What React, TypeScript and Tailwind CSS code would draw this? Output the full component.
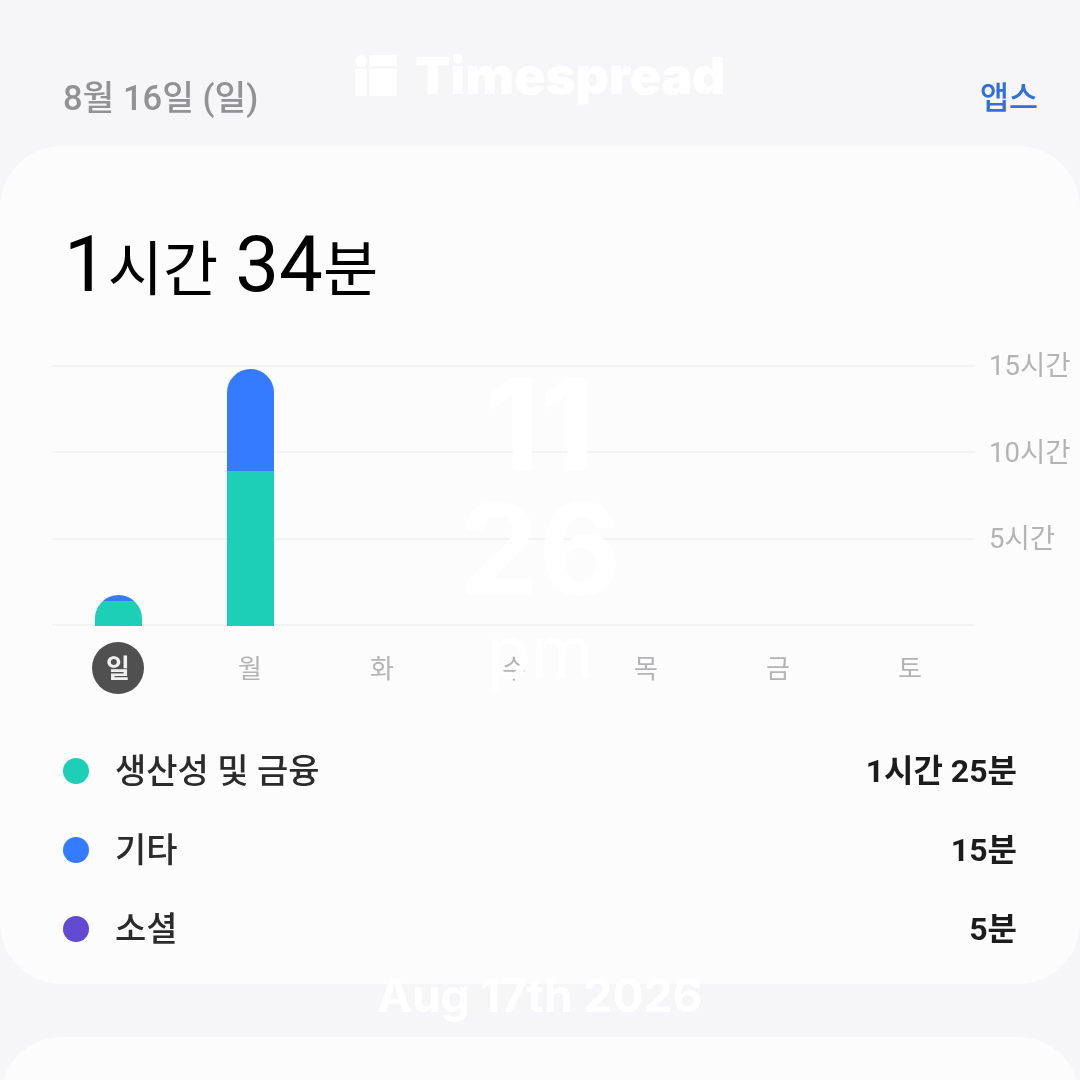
const FONT = "font-['Roboto','Noto_Sans_CJK_KR',sans-serif]";

const days = [
  { label: "일", active: true, teal: 25, blue: 6 },
  { label: "월", teal: 155, blue: 102 },
  { label: "화" },
  { label: "수" },
  { label: "목" },
  { label: "금" },
  { label: "토" },
];

const gridLabels = ["15시간", "10시간", "5시간", ""];

const legend = [
  { name: "생산성 및 금융", value: "1시간 25분", dot: "bg-[#1dcfb6]" },
  { name: "기타", value: "15분", dot: "bg-[#357bff]" },
  { name: "소셜", value: "5분", dot: "bg-[#6249d2]" },
];

function Chart() {
  return (
    <div className="relative ml-[52px] mt-[59px] h-[261px]">
      <div className="flex h-full flex-col justify-between">
        {gridLabels.map((label, i) => (
          <div key={i} className="flex h-[2px] items-center">
            <div className="h-[2px] w-[923px] bg-[#f3f3f4]" />
            <span className="ml-[14px] text-[27.5px] leading-none text-[#b4b4b6]">{label}</span>
          </div>
        ))}
      </div>
      <div className="absolute bottom-0 left-0 flex h-[258px] w-[924px] items-end">
        {days.map((d) => (
          <div key={d.label} className="flex w-[132px] justify-center">
            {d.teal ? (
              <div className="flex w-[47px] flex-col overflow-hidden rounded-t-[24px]">
                <div className="bg-[#357bff]" style={{ height: d.blue }} />
                <div className="bg-[#1dcfb6]" style={{ height: d.teal }} />
              </div>
            ) : null}
          </div>
        ))}
      </div>
    </div>
  );
}

function Days() {
  return (
    <div className="ml-[52px] mt-[16px] flex h-[52px] w-[924px]">
      {days.map((d) => (
        <div key={d.label} className="flex w-[132px] justify-center">
          <div
            className={
              d.active
                ? "flex h-[52px] w-[52px] items-center justify-center rounded-full bg-[#505050] pt-[2px] text-[26px] font-bold text-[#f0f0f0]"
                : "flex h-[52px] w-[52px] items-center justify-center pt-[2px] text-[26px] text-[#b4b4b6]"
            }
          >
            {d.label}
          </div>
        </div>
      ))}
    </div>
  );
}

function Watermark() {
  return (
    <>
      <div className="absolute left-[355px] top-[44px] flex items-start text-white">
        <svg width="42" height="41" viewBox="0 0 42 41" fill="currentColor" className="mt-[11px]">
          <circle cx="6" cy="6" r="6" />
          <rect x="0" y="14" width="12" height="27" />
          <rect x="14.5" y="0" width="27.5" height="11" />
          <rect x="14.5" y="14" width="27.5" height="27" />
        </svg>
        <span className="ml-[18px] font-['Inter',sans-serif] text-[51.5px] font-black leading-[62px]">
          Timespread
        </span>
      </div>
      <div className="absolute left-0 top-[362px] flex w-full flex-col items-center font-['Inter',sans-serif] text-white">
        <div className="text-[127px] font-bold leading-[125px]">11</div>
        <div className="text-[127px] font-bold leading-[125px]">26</div>
        <div className="text-[72px] font-normal leading-[80px]">pm</div>
      </div>
      <div className="absolute left-0 top-[968px] w-full text-center font-['Inter',sans-serif] text-[46px] font-bold leading-[54px] text-white">
        Aug 17th 2026
      </div>
    </>
  );
}

export default function App() {
  return (
    <div className={`relative h-[1080px] w-[1080px] overflow-hidden bg-[#f6f6f8] blur-[0.5px] ${FONT}`}>
      <header className="flex h-[146px] items-start justify-between pl-[63px] pr-[42px] pt-[76px]">
        <span className="text-[34.5px] font-medium leading-[44px] text-[#929295]">8월 16일 (일)</span>
        <span className="pt-[1px] text-[31.5px] font-medium leading-[44px] text-[#3070d8]">앱스</span>
      </header>

      <section className="h-[838px] rounded-[62px] bg-[#fcfcfc] pt-[80px]">
        <h1 className="ml-[64px] flex h-[80px] items-baseline font-normal leading-none text-black">
          <span className="text-[78px]">1</span>
          <span className="text-[60px]">시간</span>
          <span className="ml-[17px] text-[78px]">34</span>
          <span className="text-[60px]">분</span>
        </h1>
        <Chart />
        <Days />
        <ul className="mt-[48px] flex flex-col gap-[21px] pl-[63px] pr-[63px]">
          {legend.map((l) => (
            <li key={l.name} className="flex h-[58px] items-center justify-between">
              <div className="flex items-center">
                <span className={`h-[26px] w-[26px] rounded-full ${l.dot}`} />
                <span className="ml-[26px] text-[34px] font-medium text-[#2b2b2b]">{l.name}</span>
              </div>
              <span className="text-[32px] font-bold text-[#1c1c1c]">{l.value}</span>
            </li>
          ))}
        </ul>
      </section>

      <section className="mt-[53px] h-[200px] rounded-[62px] bg-[#fcfcfc]" />

      <Watermark />
    </div>
  );
}
